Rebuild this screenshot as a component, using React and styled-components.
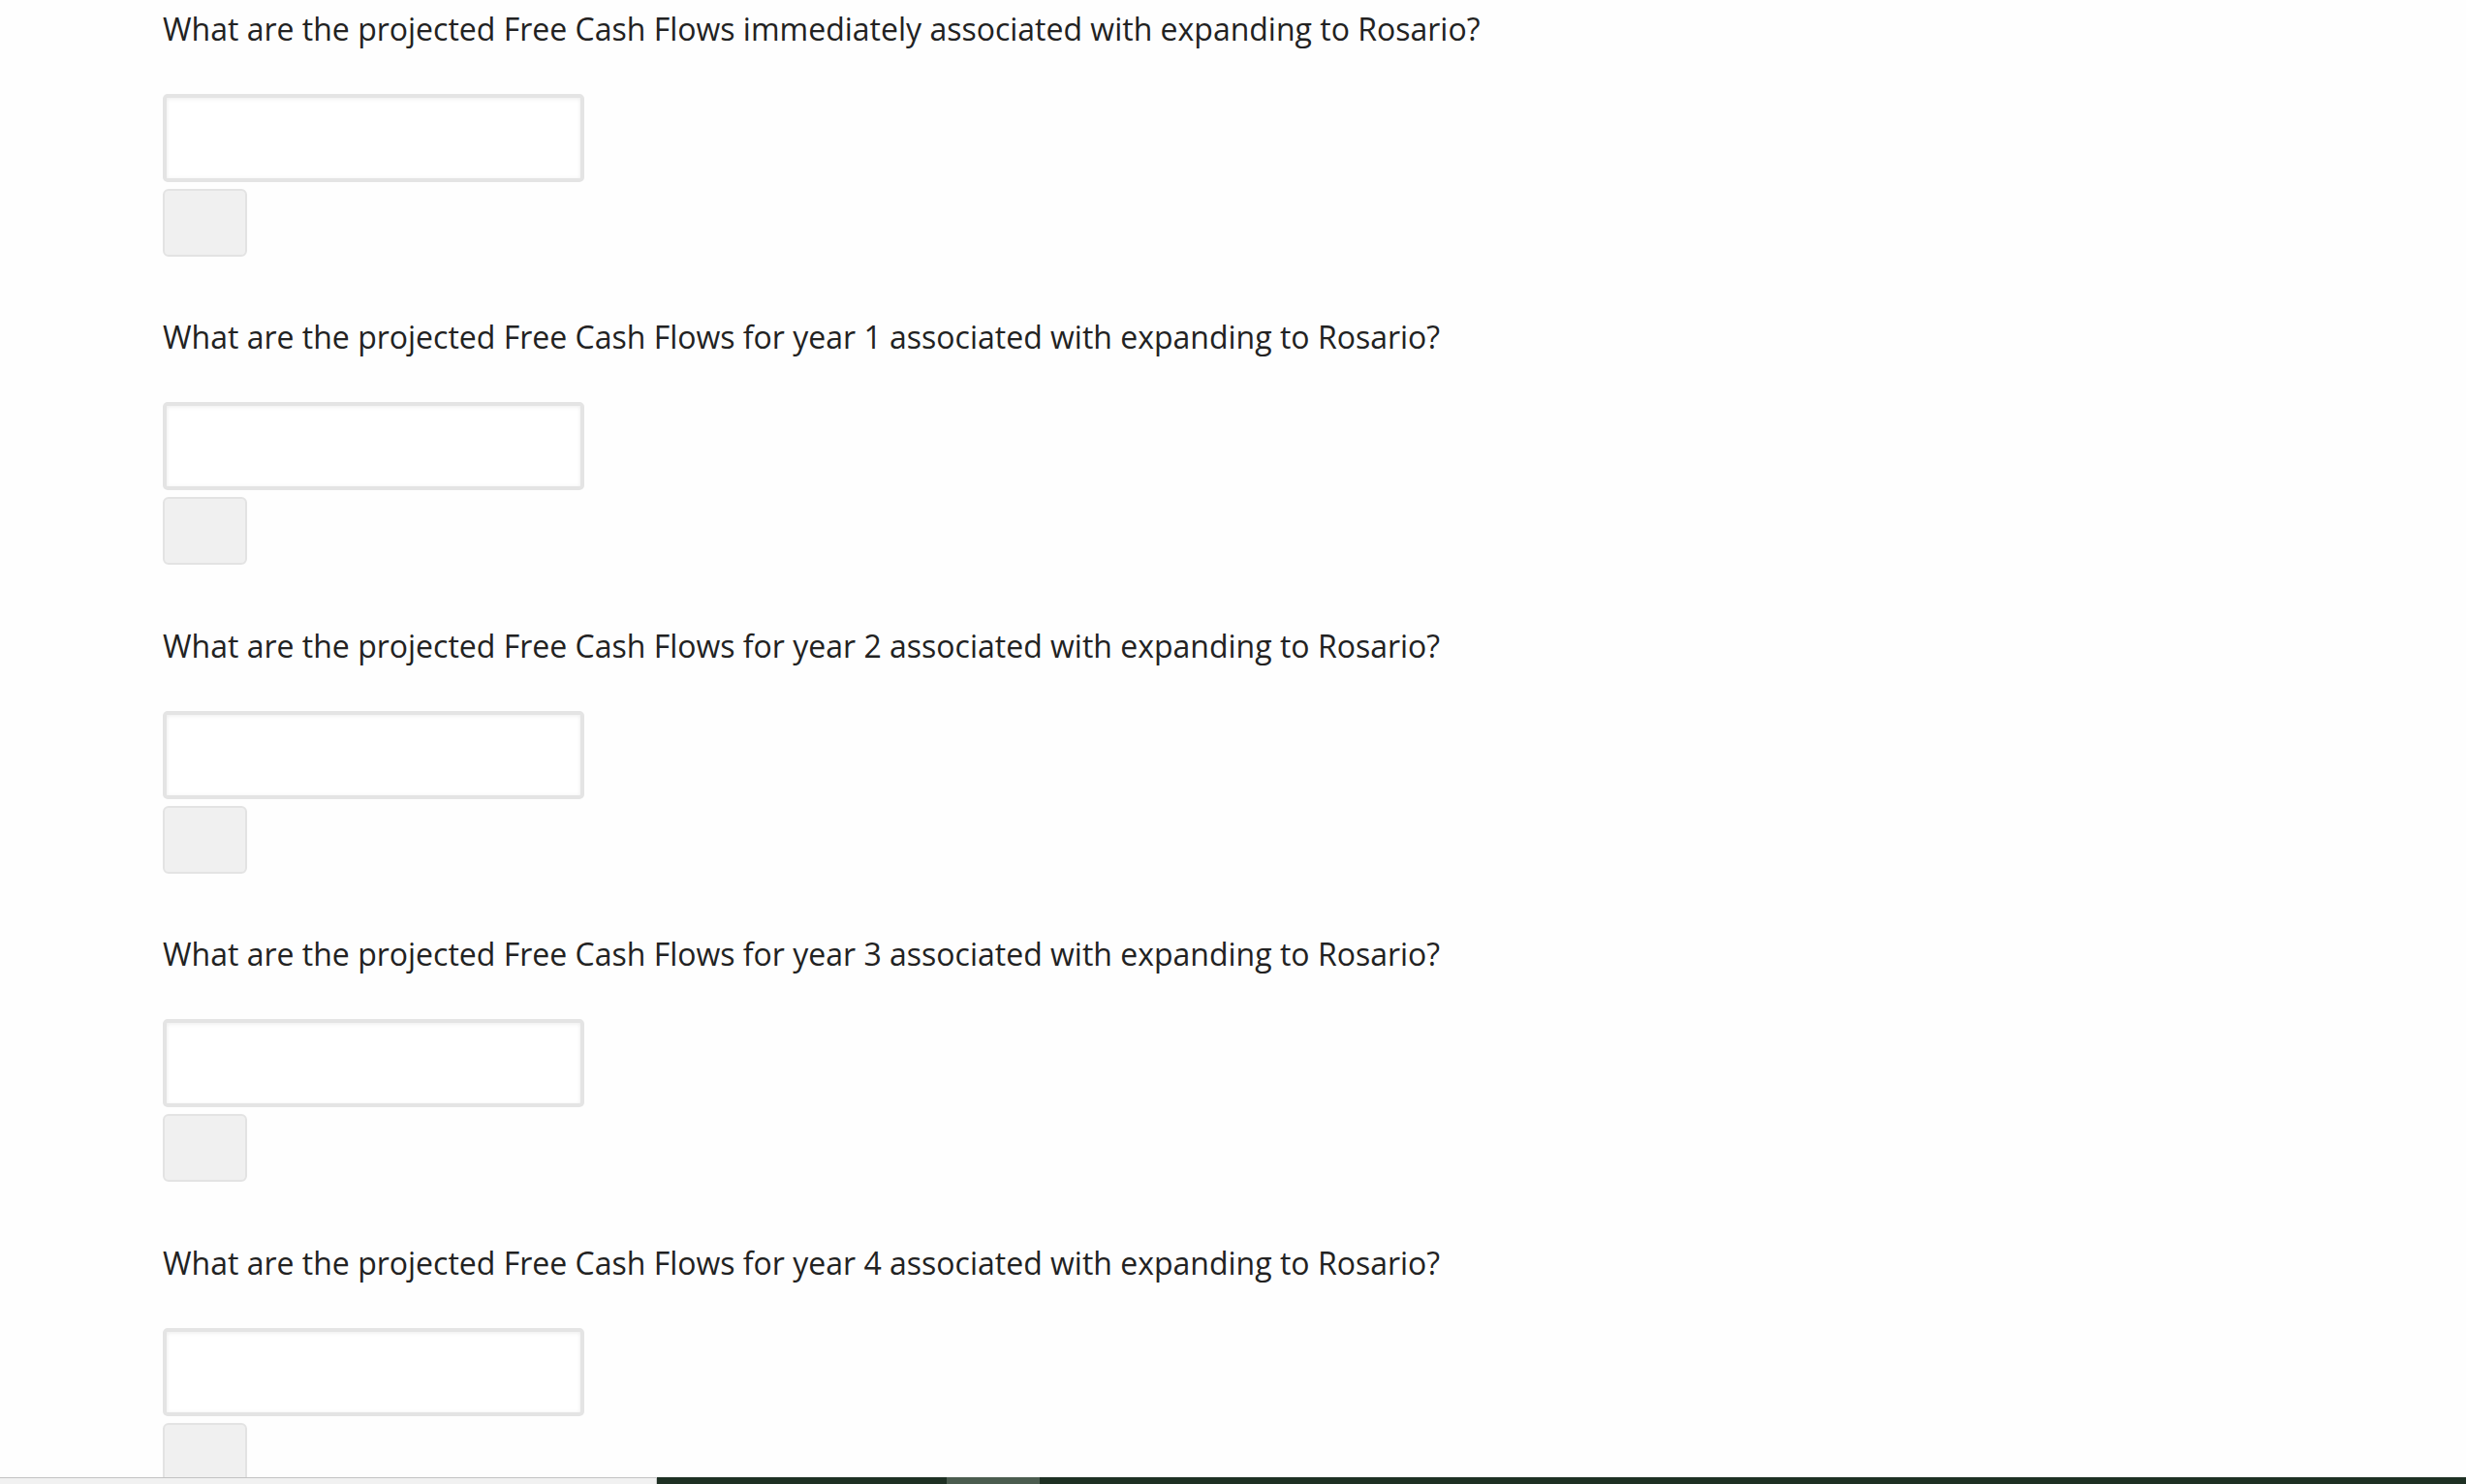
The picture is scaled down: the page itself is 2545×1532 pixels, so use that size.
import React from "react";
import styled, { createGlobalStyle } from "styled-components";

const GlobalStyle = createGlobalStyle`
  html, body {
    margin: 0;
    padding: 0;
    background: #fefefe;
  }
  body {
    font-family: "Open Sans", "Liberation Sans", sans-serif;
    color: #222;
  }
  * { box-sizing: border-box; }
`;

const Page = styled.div`
  height: 100vh;
  display: flex;
  flex-direction: column;
  overflow: hidden;
`;

const Content = styled.main`
  flex: 1;
  min-height: 0;
  overflow: hidden;
  padding: 8px 0 0 168px;
`;

const QuestionBlock = styled.section`
  display: flex;
  flex-direction: column;
  align-items: flex-start;
  margin-bottom: 61.5px;
`;

const Question = styled.p`
  margin: 0;
  font-size: 32px;
  line-height: 43.6px;
  color: #222;
  white-space: nowrap;
`;

const AnswerInput = styled.input`
  margin-top: 45.4px;
  width: 435px;
  height: 91px;
  border: 4px solid #e4e4e4;
  border-radius: 5px;
  background: #fff;
  box-shadow: inset 0 1px 4px rgba(0, 0, 0, 0.08);
  outline: none;
  font-family: inherit;
  font-size: 28px;
  padding: 0 12px;
`;

const CheckButton = styled.button`
  margin-top: 7px;
  width: 87px;
  height: 70px;
  flex-shrink: 0;
  border: 2px solid #e3e3e3;
  border-radius: 6px;
  background: #f0f0f0;
  padding: 0;
  cursor: pointer;
`;

const BottomBar = styled.footer`
  height: 7px;
  flex-shrink: 0;
  display: grid;
  grid-template-columns: 678px 1fr;
`;

const BarLeft = styled.div`
  background: #f1f1f1;
  border-top: 1px solid #c3c3c3;
  border-right: 1px solid #c8c8c8;
`;

const BarTrack = styled.div`
  background: #1e3023;
  display: flex;
  padding-left: 299px;
`;

const BarThumb = styled.div`
  width: 96px;
  background: #4b5c4f;
`;

const questions = [
  "What are the projected Free Cash Flows immediately associated with expanding to Rosario?",
  "What are the projected Free Cash Flows for year 1 associated with expanding to Rosario?",
  "What are the projected Free Cash Flows for year 2 associated with expanding to Rosario?",
  "What are the projected Free Cash Flows for year 3 associated with expanding to Rosario?",
  "What are the projected Free Cash Flows for year 4 associated with expanding to Rosario?",
];

export default function App() {
  return (
    <>
      <GlobalStyle />
      <Page>
        <Content>
          {questions.map((q, i) => (
            <QuestionBlock key={i}>
              <Question>{q}</Question>
              <AnswerInput type="text" aria-label={q} />
              <CheckButton type="button" aria-label="Check answer" />
            </QuestionBlock>
          ))}
        </Content>
        <BottomBar>
          <BarLeft />
          <BarTrack>
            <BarThumb />
          </BarTrack>
        </BottomBar>
      </Page>
    </>
  );
}
